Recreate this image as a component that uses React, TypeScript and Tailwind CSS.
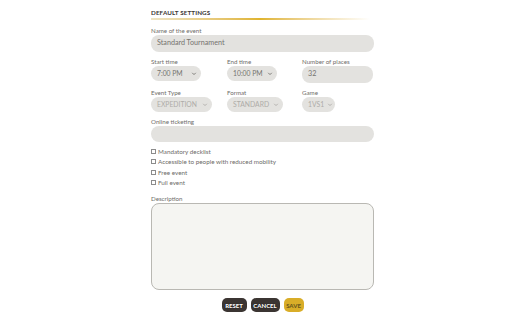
import React from "react";

const font = { fontFamily: "Lato, 'Noto Sans', sans-serif" };

function Chevron({ className = "" }: { className?: string }) {
  return (
    <svg viewBox="0 0 10 10" className={`w-[6px] h-[6px] shrink-0 ${className}`} fill="none">
      <path d="M2.5 3.5 5 6 7.5 3.5" stroke="currentColor" strokeWidth="1.5" strokeLinecap="round" strokeLinejoin="round" />
    </svg>
  );
}

function Label({ children }: { children: React.ReactNode }) {
  return <div className="text-[6.2px] leading-[8px] text-[#6e6c69] whitespace-nowrap">{children}</div>;
}

function Select({ value, width, disabled }: { value: string; width: string; disabled?: boolean }) {
  return (
    <div
      className={`${width} h-[15px] rounded-full bg-[#e3e2df] flex items-center justify-between gap-[3px] pl-[6px] pr-[4px] text-[6.8px] whitespace-nowrap ${
        disabled ? "text-[#aeaca8]" : "text-[#75736f]"
      }`}
    >
      <span>{value}</span>
      <Chevron className={disabled ? "text-[#aeaca8]" : "text-[#75736f]"} />
    </div>
  );
}

function Check({ label }: { label: string }) {
  return (
    <div className="flex items-center gap-[2px] h-[10.5px] text-[6.3px] text-[#6e6c69] whitespace-nowrap">
      <span className="w-[5px] h-[5px] border-[0.75px] border-[#8c8c8c] bg-white" />
      <span>{label}</span>
    </div>
  );
}

export default function App() {
  return (
    <div className="w-[512px] h-[320px] bg-white overflow-hidden" style={font}>
      <div className="ml-[151px] w-[223px] pt-[9px]">
        {/* Header */}
        <div className="text-[6.3px] leading-[8px] font-bold tracking-[0.1px] text-[#3a3633] uppercase">Default settings</div>
        <div className="h-[1.5px] mt-[1px] w-[219px] bg-gradient-to-r from-[#eee4c4] via-[#e0b42c] to-white" />

        <div className="mt-[7.5px]">
          <Label>Name of the event</Label>
          <div className="h-[17px] rounded-[8px] bg-[#e3e2df] flex items-center pl-[6px] text-[7.2px] text-[#75736f]">
            Standard Tournament
          </div>
        </div>

        {/* Times */}
        <div className="grid grid-cols-[76px_75px_72px] mt-[6px]">
          <div>
            <Label>Start time</Label>
            <Select value="7:00 PM" width="w-[50px]" />
          </div>
          <div>
            <Label>End time</Label>
            <Select value="10:00 PM" width="w-[50px]" />
          </div>
          <div>
            <Label>Number of places</Label>
            <div className="h-[17px] w-[71px] rounded-[8px] bg-[#e3e2df] flex items-center pl-[6px] text-[7.2px] text-[#75736f]">
              32
            </div>
          </div>
        </div>

        {/* Type / format / game */}
        <div className="grid grid-cols-[76px_75px_72px] mt-[6px]">
          <div>
            <Label>Event Type</Label>
            <Select value="EXPEDITION" width="w-[61px]" disabled />
          </div>
          <div>
            <Label>Format</Label>
            <Select value="STANDARD" width="w-[56px]" disabled />
          </div>
          <div>
            <Label>Game</Label>
            <Select value="1VS1" width="w-[33px]" disabled />
          </div>
        </div>

        <div className="mt-[6px]">
          <Label>Online ticketing</Label>
          <div className="h-[16px] rounded-[8px] bg-[#e3e2df]" />
        </div>

        <div className="mt-[4px] flex flex-col">
          <Check label="Mandatory decklist" />
          <Check label="Accessible to people with reduced mobility" />
          <Check label="Free event" />
          <Check label="Full event" />
        </div>

        <div className="mt-[7px]">
          <Label>Description</Label>
          <div className="h-[87px] rounded-[8px] border border-[#b9b8b3] bg-[#f5f5f2]" />
        </div>

        {/* Actions */}
        <div className="flex justify-center gap-[4px] mt-[8px]">
          <button className="h-[14px] w-[25px] rounded-[5px] bg-[#3b3532] text-white text-[6px] font-black [text-shadow:0_0_1px_#000]">
            RESET
          </button>
          <button className="h-[14px] w-[29px] rounded-[5px] bg-[#3b3532] text-white text-[6px] font-black [text-shadow:0_0_1px_#000]">
            CANCEL
          </button>
          <button className="h-[14px] w-[20px] rounded-[5px] bg-[#d9ad28] text-[#6e5a1c] text-[6px] font-black">
            SAVE
          </button>
        </div>
      </div>
    </div>
  );
}
